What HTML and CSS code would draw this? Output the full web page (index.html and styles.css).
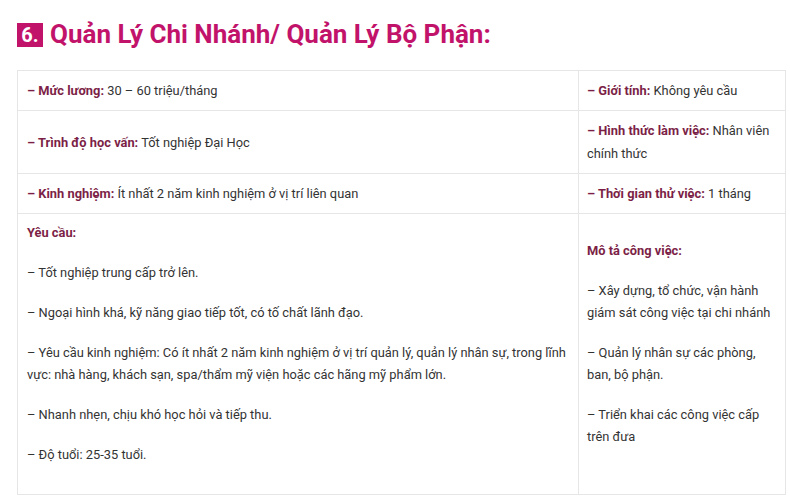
FILE: index.html
```html
<!DOCTYPE html>
<html lang="vi">
<head>
<meta charset="utf-8">
<link rel="stylesheet" href="styles.css">
</head>
<body>
<div class="page">
  <h3 class="title"><span class="num">6.</span> Quản Lý Chi Nhánh/ Quản Lý Bộ Phận:</h3>
  <table class="jobs">
    <tr class="r1">
      <td class="left"><strong class="lbl">– Mức lương:</strong> 30 – 60 triệu/tháng</td>
      <td class="right"><strong class="lbl">– Giới tính:</strong> <span class="val">Không yêu cầu</span></td>
    </tr>
    <tr class="r2">
      <td class="left"><strong class="lbl">– Trình độ học vấn:</strong> Tốt nghiệp Đại Học</td>
      <td class="right"><strong class="lbl">– Hình thức làm việc:</strong> <span class="val">Nhân viên chính thức</span></td>
    </tr>
    <tr class="r3">
      <td class="left"><strong class="lbl">– Kinh nghiệm:</strong> Ít nhất 2 năm kinh nghiệm ở vị trí liên quan</td>
      <td class="right"><strong class="lbl">– Thời gian thử việc:</strong> <span class="val">1 tháng</span></td>
    </tr>
    <tr class="r4">
      <td class="left">
        <p><strong class="lbl">Yêu cầu:</strong></p>
        <p>– Tốt nghiệp trung cấp trở lên.</p>
        <p>– Ngoại hình khá, kỹ năng giao tiếp tốt, có tố chất lãnh đạo.</p>
        <p>– Yêu cầu kinh nghiệm: Có ít nhất 2 năm kinh nghiệm ở vị trí quản lý, quản lý nhân sự, trong lĩnh vực: nhà hàng, khách sạn, spa/thẩm mỹ viện hoặc các hãng mỹ phẩm lớn.</p>
        <p>– Nhanh nhẹn, chịu khó học hỏi và tiếp thu.</p>
        <p>– Độ tuổi: 25-35 tuổi.</p>
      </td>
      <td class="right">
        <p><strong class="lbl">Mô tả công việc:</strong></p>
        <p>– Xây dựng, tổ chức, vận hành giám sát công việc tại chi nhánh</p>
        <p>– Quản lý nhân sự các phòng, ban, bộ phận.</p>
        <p>– Triển khai các công việc cấp trên đưa</p>
      </td>
    </tr>
  </table>
</div>
</body>
</html>
```

FILE: styles.css
```css
html, body {
  margin: 0;
  padding: 0;
  background: #ffffff;
}

body {
  font-family: Roboto, "Noto Sans", Arial, sans-serif;
  color: #333333;
}

.page {
  padding: 16px 0 0 17px;
  width: 768px;
}

.title {
  margin: 0;
  height: 36px;
  display: flex;
  align-items: center;
  gap: 7px;
  font-size: 26px;
  font-weight: 700;
  color: #c2136b;
  line-height: 36px;
}

.num {
  display: inline-flex;
  align-items: center;
  justify-content: center;
  width: 26px;
  height: 24px;
  background: #c2136b;
  color: #ffffff;
  font-size: 20px;
  line-height: 24px;
  margin-top: 2px;
}

.jobs {
  margin-top: 18px;
  width: 769px;
  border-collapse: collapse;
  font-size: 12.85px;
  line-height: 23px;
}

.jobs td {
  border: 1px solid #e6e6e6;
  padding: 8px 6px 8px 9px;
  vertical-align: middle;
}

.jobs td.left {
  width: 545px;
}

.jobs td.right {
  padding-left: 8px;
}

.lbl {
  color: #7c1f47;
  font-weight: 700;
}

.r4 td {
  line-height: 22px;
  padding-bottom: 28px;
}

.r4 p {
  margin: 0 0 18px 0;
}

.r4 p:last-child {
  margin-bottom: 0;
}
```
